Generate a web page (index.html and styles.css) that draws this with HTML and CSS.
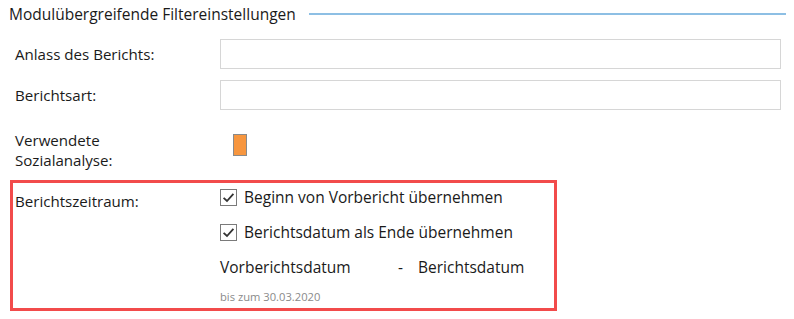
FILE: index.html
```html
<!DOCTYPE html>
<html lang="de">
<head>
<meta charset="utf-8">
<link rel="stylesheet" href="styles.css">
</head>
<body>
<div class="page">
  <div class="header">
    <span class="title">Modulübergreifende Filtereinstellungen</span>
    <span class="rule"></span>
  </div>
  <div class="rows">
    <div class="row row-input first">
      <label class="label">Anlass des Berichts:</label>
      <div class="field"></div>
    </div>
    <div class="row row-input">
      <label class="label">Berichtsart:</label>
      <div class="field"></div>
    </div>
    <div class="row row-color">
      <label class="label">Verwendete<br>Sozialanalyse:</label>
      <div><span class="swatch"></span></div>
    </div>
  </div>
  <div class="highlight">
    <div class="row row-period">
      <label class="label period-label">Berichtszeitraum:</label>
      <div class="period">
        <div class="check-line">
          <span class="cb"><svg width="15" height="15" viewBox="0 0 15 15"><polyline points="2.6,7.8 6,11 12.4,3.8" fill="none" stroke="#333" stroke-width="1.8"/></svg></span>
          <span>Beginn von Vorbericht übernehmen</span>
        </div>
        <div class="check-line">
          <span class="cb"><svg width="15" height="15" viewBox="0 0 15 15"><polyline points="2.6,7.8 6,11 12.4,3.8" fill="none" stroke="#333" stroke-width="1.8"/></svg></span>
          <span>Berichtsdatum als Ende übernehmen</span>
        </div>
        <div class="dates">
          <span class="date-from">Vorberichtsdatum</span>
          <span class="dash">-</span>
          <span>Berichtsdatum</span>
        </div>
        <div class="hint">bis zum 30.03.2020</div>
      </div>
    </div>
  </div>
</div>
</body>
</html>
```
FILE: styles.css
```css
html, body {
  margin: 0;
  padding: 0;
  background: #ffffff;
}
body {
  font-family: "Open Sans", "Noto Sans", sans-serif;
  color: #1a1a1a;
}
.page {
  width: 794px;
  height: 319px;
  overflow: hidden;
}
.header {
  display: flex;
  align-items: center;
  height: 27px;
  padding-left: 9px;
  padding-right: 8px;
}
.title {
  font-size: 15.5px;
  white-space: nowrap;
}
.rule {
  flex: 1;
  height: 2px;
  background: #8dbfe4;
  margin-left: 13px;
}
.rows {
  padding-left: 15px;
}
.row {
  display: grid;
  grid-template-columns: 205px 561px;
  align-items: center;
}
.label {
  font-size: 15.1px;
  line-height: 20px;
}
.row-input {
  margin-top: 11px;
}
.row-input.first {
  margin-top: 12px;
}
.field {
  height: 28px;
  border: 1px solid #d6d6d6;
  background: #fff;
}
.row-color {
  margin-top: 20px;
  align-items: start;
}
.swatch {
  display: block;
  margin-left: 13px;
  margin-top: 4px;
  width: 12px;
  height: 20px;
  background: #f7963f;
  border: 1px solid #8a8a8a;
}
.highlight {
  margin-top: 10px;
  margin-left: 10px;
  width: 547px;
  height: 131px;
  box-sizing: border-box;
  border: 3px solid #f24b4b;
  padding-left: 2px;
}
.row-period {
  grid-template-columns: 205px 1fr;
  align-items: start;
}
.period-label {
  margin-top: 8px;
}
.period {
  display: flex;
  flex-direction: column;
  gap: 11px;
  padding-top: 2px;
}
.check-line {
  display: flex;
  align-items: center;
  gap: 7px;
  height: 24px;
  font-size: 15.5px;
}
.cb {
  width: 15px;
  height: 15px;
  border: 1px solid #7a7a7a;
  background: #fff;
  display: flex;
}
.dates {
  display: flex;
  align-items: center;
  height: 24px;
  font-size: 15.5px;
}
.date-from {
  width: 178px;
}
.dash {
  width: 20px;
}
.hint {
  font-size: 11.2px;
  line-height: 16px;
  color: #8a8a8a;
  margin-top: -1px;
}
```
